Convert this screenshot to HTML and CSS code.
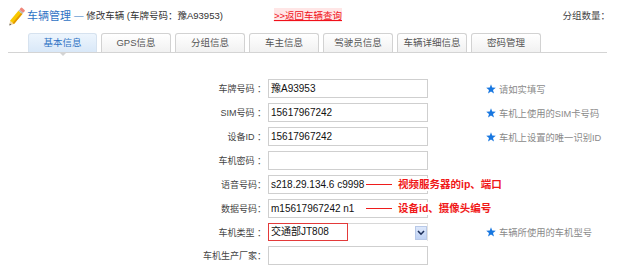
FILE: index.html
```html
<!DOCTYPE html>
<html lang="zh-CN">
<head>
  <meta charset="UTF-8" />
  <title>车辆管理 - 修改车辆</title>
  <link rel="stylesheet" href="styles.css">
</head>
<body>

  <div class="head">
    <svg class="pencil" width="20" height="20" viewBox="0 0 20 20">
      <g transform="translate(10.5 11) rotate(-50)">
        <polygon points="-11,0 -7,-2.6 -7,2.6" fill="#f1d7a4"/>
        <polygon points="-11,0 -9.3,-1.1 -9.3,1.1" fill="#555"/>
        <rect x="-7" y="-2.6" width="13" height="5.2" fill="#f8c800"/>
        <rect x="-7" y="0.9" width="13" height="1.7" fill="#e29400"/>
        <rect x="6" y="-2.6" width="1.6" height="5.2" fill="#b8b8b8"/>
        <rect x="7.6" y="-2.6" width="3" height="5.2" rx="1" fill="#f0867a"/>
      </g>
    </svg>
    <span class="title">车辆管理</span>
    <span class="sub">— 修改车辆 (车牌号码：豫A93953)</span>
    <a class="back" href="#">&gt;&gt;返回车辆查询</a>
    <span class="group">分组数量：</span>
  </div>

  <ul class="tabs">
    <li class="active">基本信息</li>
    <li>GPS信息</li>
    <li>分组信息</li>
    <li>车主信息</li>
    <li>驾驶员信息</li>
    <li>车辆详细信息</li>
    <li>密码管理</li>
  </ul>

  <div class="form">
    <div class="row">
      <label>车牌号码 ：</label>
      <div class="field"><div class="input">豫A93953</div></div>
      <div class="hint"><svg class="star" viewBox="0 0 10 10"><polygon points="5,0.3 6.2,3.6 9.8,3.7 7,5.9 8,9.5 5,7.4 2,9.5 3,5.9 0.2,3.7 3.8,3.6"/></svg>请如实填写</div>
    </div>
    <div class="row">
      <label>SIM号码 ：</label>
      <div class="field"><div class="input">15617967242</div></div>
      <div class="hint"><svg class="star" viewBox="0 0 10 10"><polygon points="5,0.3 6.2,3.6 9.8,3.7 7,5.9 8,9.5 5,7.4 2,9.5 3,5.9 0.2,3.7 3.8,3.6"/></svg>车机上使用的SIM卡号码</div>
    </div>
    <div class="row">
      <label>设备ID ：</label>
      <div class="field"><div class="input">15617967242</div></div>
      <div class="hint"><svg class="star" viewBox="0 0 10 10"><polygon points="5,0.3 6.2,3.6 9.8,3.7 7,5.9 8,9.5 5,7.4 2,9.5 3,5.9 0.2,3.7 3.8,3.6"/></svg>车机上设置的唯一识别ID</div>
    </div>
    <div class="row">
      <label>车机密码 ：</label>
      <div class="field"><div class="input"></div></div>
      <div class="hint"></div>
    </div>
    <div class="row">
      <label>语音号码：</label>
      <div class="field">
        <div class="input">s218.29.134.6 c9998</div>
        <div class="note"><span class="note-line"></span><span class="note-text">视频服务器的ip、端口</span></div>
      </div>
      <div class="hint"></div>
    </div>
    <div class="row">
      <label>数据号码：</label>
      <div class="field">
        <div class="input">m15617967242 n1</div>
        <div class="note"><span class="note-line"></span><span class="note-text">设备id、摄像头编号</span></div>
      </div>
      <div class="hint"></div>
    </div>
    <div class="row row-combo">
      <label>车机类型 ：</label>
      <div class="field">
        <div class="combo">
          <div class="combo-text">交通部JT808</div>
          <div class="combo-btn">
            <svg width="8" height="6" viewBox="0 0 8 6"><polyline points="1,1 4,4.2 7,1" fill="none" stroke="#1d2f5a" stroke-width="1.6"/></svg>
          </div>
        </div>
      </div>
      <div class="hint"><svg class="star" viewBox="0 0 10 10"><polygon points="5,0.3 6.2,3.6 9.8,3.7 7,5.9 8,9.5 5,7.4 2,9.5 3,5.9 0.2,3.7 3.8,3.6"/></svg>车辆所使用的车机型号</div>
    </div>
    <div class="row">
      <label>车机生产厂家：</label>
      <div class="field"><div class="input"></div></div>
      <div class="hint"></div>
    </div>
  </div>

</body>
</html>
```

FILE: styles.css
```css
* {
  box-sizing: border-box;
}

body {
  margin: 0;
  background: #fff;
  color: #333;
  font-family: "Liberation Sans", "Noto Sans CJK SC", sans-serif;
  font-size: 9px;
}

/* header */
.head {
  display: flex;
  align-items: center;
  height: 28px;
  padding: 2px 8px 0 6px;
}

.pencil {
  margin-right: 1px;
  margin-top: 2px;
}

.title {
  font-size: 11px;
  color: #2f73c4;
  margin-right: 3px;
}

.sub {
  font-size: 9.5px;
  color: #333;
}

.sub::first-letter {
  color: #2f73c4;
}

.back {
  margin-left: 51px;
  font-size: 9.5px;
  color: #f0101a;
  text-decoration: underline;
  background: #ffe6e6;
}

.group {
  margin-left: auto;
  margin-right: 8px;
  font-size: 9.5px;
  color: #444;
}

/* tabs */
.tabs {
  display: flex;
  gap: 4px;
  list-style: none;
  margin: 5px 19px 0 8px;
  padding: 0 0 0 20px;
  border-bottom: 1px solid #d4d4d4;
}

.tabs li {
  position: relative;
  width: 70px;
  height: 19px;
  line-height: 18px;
  text-align: center;
  font-size: 9.5px;
  color: #555;
  border: 1px solid #d2d2d2;
  border-bottom: none;
  border-radius: 3px 3px 0 0;
  background: linear-gradient(#ffffff, #f1f1f1);
}

.tabs li.active {
  width: 69px;
  color: #2f73c4;
  border-color: #d6e2ef;
  background: linear-gradient(#edf5fd, #d9e8f8);
}

.tabs li.active::after {
  content: "";
  position: absolute;
  left: 30px;
  bottom: -4px;
  border-left: 4px solid transparent;
  border-right: 4px solid transparent;
  border-top: 4px solid #d4d4d4;
}

/* form */
.form {
  padding-top: 26px;
}

.row {
  display: grid;
  grid-template-columns: 266px 160px 1fr;
  column-gap: 2px;
  align-items: center;
  margin-bottom: 5px;
}

.row-combo {
  margin-top: 4px;
  margin-bottom: 5px;
}

.row label {
  text-align: right;
  color: #444;
  font-size: 9px;
}

.field {
  position: relative;
}

.input {
  height: 19px;
  line-height: 17px;
  padding-left: 2px;
  border: 1px solid #cfcfcf;
  font-size: 10px;
  color: #111;
  white-space: nowrap;
  overflow: hidden;
}

.hint {
  display: flex;
  align-items: center;
  padding-left: 56px;
  font-size: 9.3px;
  color: #8a8a8a;
}

.star {
  width: 10px;
  height: 10px;
  margin-right: 3px;
  fill: #1877e0;
}

/* red annotations laid over the fields */
.note {
  position: absolute;
  left: 98px;
  top: 3px;
  display: flex;
  align-items: center;
  white-space: nowrap;
}

.note-line {
  width: 26px;
  height: 1px;
  background: #ee1c1c;
  margin-right: 6px;
}

.note-text {
  background: #fff;
  color: #f01818;
  font-size: 10.5px;
  font-weight: bold;
  line-height: 13px;
}

/* combo box */
.combo {
  display: flex;
  align-items: center;
  height: 18px;
  border-top: 1px solid #d8d8d8;
  border-right: 1px solid #e2e2e2;
}

.combo-text {
  width: 80px;
  height: 18px;
  margin-top: -1px;
  line-height: 16px;
  padding-left: 2px;
  border: 1px solid #e33a3a;
  font-size: 10px;
  color: #111;
}

.combo-btn {
  display: flex;
  align-items: center;
  justify-content: center;
  width: 12px;
  height: 14px;
  margin-left: auto;
  border: 1px solid #b8c9e8;
  background: linear-gradient(#dde8fb, #bfd2f4);
}
```
